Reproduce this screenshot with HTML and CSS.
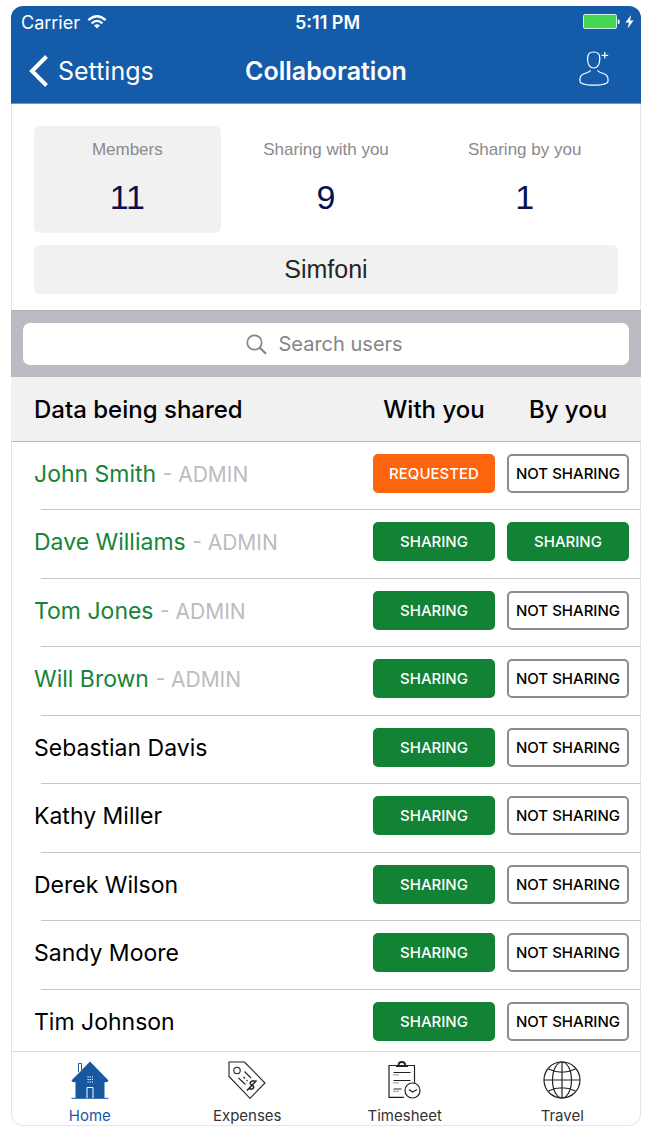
FILE: index.html
```
<!DOCTYPE html>
<html lang="en">
<head>
<meta charset="utf-8">
<meta name="viewport" content="width=device-width, initial-scale=1">
<title>Collaboration</title>
<link rel="stylesheet" href="styles.css">
</head>
<body>
<div class="app">
  <header class="top">
    <div class="status">
      <div class="carrier">Carrier
        <svg class="wifi" width="20" height="14" viewBox="0 0 20 14" fill="none" stroke="#fff" stroke-width="2.3"><path d="M1.3 5.2Q10-2.6 18.700 5.200M4.600 8.300Q10 3.500 15.400 8.300"/><path d="M10 13.600L7 10.500Q10 8.200 13 10.500Z" fill="#fff" stroke="none"/></svg>
      </div>
      <div class="clock">5:11 PM</div>
      <div class="power">
        <svg width="38" height="16" viewBox="0 0 38 16"><rect x=".5" y=".5" width="33" height="14" rx="1.500" fill="#45d651" stroke="#c9f3e0"/><path d="M34.800 5v5.500q2-.6 2-2.750T34.800 5Z" fill="#fff"/></svg>
        <svg width="9" height="14" viewBox="0 0 9 14" fill="#fff"><path d="M6.200 0L.4 7.600H4L2.600 13.600L8.600 5.600H5Z"/></svg>
      </div>
    </div>
    <nav class="nav">
      <a class="back" href="#settings">
        <svg width="20" height="32" viewBox="0 0 20 32" fill="none" stroke="#fff" stroke-width="4"><path d="M17.500 1.500L3 16L17.500 30.500"/></svg>
        Settings</a>
      <h1 class="title">Collaboration</h1>
      <button class="add" type="button" aria-label="Add user">
        <svg width="30" height="35" viewBox="0 0 30 35" fill="none" stroke="#fff" stroke-width="1.200"><path d="M8.600 8.500C8.300 3 10.500 1 14.700 1S21.100 3 20.800 8.500C20.500 14 18 17 14.700 17S8.900 14 8.600 8.500Z"/><path d="M11.500 19.300Q11 20.500 9 21.300L4.500 23Q1 24.500 1 28.500Q.6 31.500 2.500 32.200Q7 34.200 15 34.200T27.500 32.200Q29.400 31.500 29 28.500Q29 24.500 25.500 23L21 21.300Q19 20.500 18.500 19.300"/><path d="M25.800 1V7.600M22.500 4.300H29.200"/></svg>
      </button>
    </nav>
  </header>

  <section class="summary">
    <div class="stats">
      <button class="stat stat-on" type="button"><span class="label">Members</span><span class="count">11</span></button>
      <button class="stat" type="button"><span class="label">Sharing with you</span><span class="count">9</span></button>
      <button class="stat" type="button"><span class="label">Sharing by you</span><span class="count">1</span></button>
    </div>
    <button class="company" type="button">Simfoni</button>
  </section>

  <div class="search">
    <label class="box">
      <svg width="21" height="21" viewBox="0 0 21 21" fill="none" stroke="#85858a" stroke-width="1.700"><circle cx="8.500" cy="8.500" r="7.200"/><path d="M13.500 13.500L20 19.800" stroke-width="2.200"/></svg>
      <input class="field" type="text" placeholder="Search users" aria-label="Search users">
    </label>
  </div>

  <main class="list">
    <table class="people">
      <thead>
        <tr><th class="who" scope="col">Data being shared</th><th class="with" scope="col">With you</th><th class="by" scope="col">By you</th></tr>
      </thead>
      <tbody>
        <tr><td class="who"><span class="admin">John Smith</span> <span class="role">- ADMIN</span></td><td class="with"><button class="pill requested" type="button">REQUESTED</button></td><td class="by"><button class="pill" type="button">NOT SHARING</button></td></tr>
        <tr><td class="who"><span class="admin">Dave Williams</span> <span class="role">- ADMIN</span></td><td class="with"><button class="pill sharing" type="button">SHARING</button></td><td class="by"><button class="pill sharing" type="button">SHARING</button></td></tr>
        <tr><td class="who"><span class="admin">Tom Jones</span> <span class="role">- ADMIN</span></td><td class="with"><button class="pill sharing" type="button">SHARING</button></td><td class="by"><button class="pill" type="button">NOT SHARING</button></td></tr>
        <tr><td class="who"><span class="admin">Will Brown</span> <span class="role">- ADMIN</span></td><td class="with"><button class="pill sharing" type="button">SHARING</button></td><td class="by"><button class="pill" type="button">NOT SHARING</button></td></tr>
        <tr><td class="who">Sebastian Davis</td><td class="with"><button class="pill sharing" type="button">SHARING</button></td><td class="by"><button class="pill" type="button">NOT SHARING</button></td></tr>
        <tr><td class="who">Kathy Miller</td><td class="with"><button class="pill sharing" type="button">SHARING</button></td><td class="by"><button class="pill" type="button">NOT SHARING</button></td></tr>
        <tr><td class="who">Derek Wilson</td><td class="with"><button class="pill sharing" type="button">SHARING</button></td><td class="by"><button class="pill" type="button">NOT SHARING</button></td></tr>
        <tr><td class="who">Sandy Moore</td><td class="with"><button class="pill sharing" type="button">SHARING</button></td><td class="by"><button class="pill" type="button">NOT SHARING</button></td></tr>
        <tr><td class="who">Tim Johnson</td><td class="with"><button class="pill sharing" type="button">SHARING</button></td><td class="by"><button class="pill" type="button">NOT SHARING</button></td></tr>
      </tbody>
    </table>
  </main>

  <nav class="tabs">
    <a class="tab tab-on" href="#home">
      <svg width="38" height="38" viewBox="0 0 38 38"><path d="M7.500 11V2.500H10.500V9" fill="#fff" stroke="#17589f"/><path d="M19 .5L37.500 19.500Q36.500 22 33.500 21V37H4.500V21Q1.500 22 .5 19.500Z" fill="#17589f"/><path d="M.5 37.300H37.500" stroke="#17589f"/><path d="M16 37V26.500H22V37" fill="#17589f" stroke="#fff"/><path d="M16.500 16H22M16.500 18.500H22M16.500 21H22" stroke="#fff" stroke-width="1.200" stroke-dasharray="1.200 1"/></svg>
      Home</a>
    <a class="tab" href="#expenses">
      <svg width="38" height="38" viewBox="0 0 38 38" fill="none" stroke="#222" stroke-width="1.100"><path d="M1 1H16.500L37 22L22 37.300L1 15.500Z"/><circle cx="9" cy="9.500" r="3.200"/><path d="M16.500 10.500L23 17M10.500 17L17.500 23.500M15.500 16L17 17.500M18.500 19L19.500 20"/><path d="M27.500 21.500Q26.500 18.800 23.500 20.300Q21 22 23.200 23.700Q26.500 25 25.500 27Q23.500 29.500 20.800 26.800M19 29.500L28.500 19.500" stroke-width="1.500"/></svg>
      Expenses</a>
    <a class="tab" href="#timesheet">
      <svg width="38" height="38" viewBox="0 0 38 38" fill="none" stroke="#222" stroke-width="1.200"><path d="M18 36.400H3V4.500H28.500V22"/><path d="M10 5H22M12.500 4Q12.500 1 15.800 1T19.200 4" stroke-width="1.800"/><path d="M7.500 11.500H24.500M7.500 19.500H24.500M7.500 28H15.500"/><path d="M7.500 13.800H12.500M7.500 21.800H12.500M7.500 30.300H12.500" stroke="#888" stroke-dasharray="2 1"/><circle cx="26.500" cy="29.500" r="7.500"/><path d="M23 28.500L26.500 31L31 28.500"/></svg>
      Timesheet</a>
    <a class="tab" href="#travel">
      <svg width="38" height="38" viewBox="0 0 38 38" fill="none" stroke="#222" stroke-width="1.200"><circle cx="19" cy="19" r="18"/><ellipse cx="19" cy="19" rx="9.500" ry="18"/><path d="M19 1V37M1 19H37M5.500 8Q19 14.500 32.500 8M5.500 30Q19 23.500 32.500 30"/></svg>
      Travel</a>
  </nav>
</div>
</body>
</html>
```
FILE: styles.css
```
* { box-sizing: border-box; }
body {
  margin: 0;
  height: 100vh;
  padding: 6px 11px 11px;
  background: #fff;
  color: #000;
  font-family: Inter, "Liberation Sans", sans-serif;
}
button {
  margin: 0;
  padding: 0;
  border: 0;
  background: none;
  font-family: "Liberation Sans", Arial, sans-serif;
}
a { text-decoration: none; color: inherit; }
svg { display: block; flex: none; }

.app {
  display: flex;
  flex-direction: column;
  height: 100%;
  border-radius: 12px;
  overflow: hidden;
  box-shadow: inset 0 0 0 1px #e6e6e8;
}
.top {
  background: #145ba9;
  color: #fff;
  border-bottom: 1px solid #6a97c9;
}
.status, .nav {
  display: grid;
  grid-template-columns: 1fr auto 1fr;
  align-items: center;
}
.status {
  height: 32px;
  padding: 0 7px 0 10px;
  font-size: 18px;
}
.carrier { display: flex; align-items: center; gap: 7px; }
.clock { font-weight: 600; }
.power { display: flex; justify-content: flex-end; align-items: center; gap: 4px; }
.nav {
  height: 65px;
  padding: 0 18px;
}
.back { display: flex; align-items: center; gap: 9px; font-size: 25px; }
.title { margin: 0; font-size: 25px; font-weight: 600; }
.add { justify-self: end; margin-right: 14px; padding-bottom: 4px; }

.summary { padding: 22px 23px 16px; }
.stats {
  display: grid;
  grid-template-columns: repeat(3, 1fr);
  gap: 12px;
}
.stat {
  display: flex;
  flex-direction: column;
  align-items: center;
  gap: 15px;
  height: 107px;
  padding-top: 14px;
  border-radius: 6px;
}
.stat-on, .company { background: #f1f1f2; }
.label { font-size: 17px; line-height: 20px; color: #8a8a8c; }
.count { font-size: 34px; line-height: 44px; color: #06124f; }
.company {
  display: block;
  width: 100%;
  height: 49px;
  margin-top: 12px;
  border-radius: 6px;
  font-size: 25px;
  color: #262626;
}

.search {
  padding: 12px;
  background: #bcbbc3;
  border-top: 1px solid #aeadb3;
}
.box {
  display: flex;
  justify-content: center;
  align-items: center;
  gap: 12px;
  height: 42px;
  border-radius: 7px;
  background: #fff;
}
.field {
  width: 128px;
  padding: 0;
  border: 0;
  outline: 0;
  background: none;
  font: 20px Inter, sans-serif;
}
.field::placeholder { color: #85858a; }

.list {
  flex: 1;
  min-height: 0;
  overflow-y: auto;
  scrollbar-width: none;
}
.people {
  width: 100%;
  border-spacing: 0;
  table-layout: fixed;
}
th {
  height: 65px;
  padding: 0;
  background: #f1f1f2;
  border-bottom: 1px solid #b9b9bd;
  font: 500 24px Inter, sans-serif;
}
td {
  height: 68px;
  padding: 0;
  vertical-align: top;
  border-bottom: 1px solid #c6c6ca;
}
tr:nth-child(even) td { height: 69px; }
.who { padding-left: 23px; text-align: left; }
td.who {
  padding-top: 12px;
  border-bottom: 0;
  background: linear-gradient(#c6c6ca, #c6c6ca) 30px 100% / 100% 1px no-repeat;
  font-size: 23px;
  line-height: 40px;
}
.with { width: 134px; padding: 0 6px; }
.by { width: 140px; padding: 0 12px 0 6px; }
td.with, td.by { padding-top: 12px; }
.admin { color: #168339; }
.role { font-size: 21px; color: #bcbcc0; }
.pill {
  display: block;
  width: 100%;
  height: 39px;
  border: 2px solid #8c8c90;
  border-radius: 5px;
  background: #fff;
  color: #000;
  font: 500 15px Inter, sans-serif;
}
.sharing { background: #128234; border-color: #128234; color: #fff; }
.requested { background: #fc640d; border-color: #fc640d; color: #fff; }

.tabs {
  display: grid;
  grid-template-columns: repeat(4, 1fr);
  height: 75px;
  border-top: 1px solid #dcdcde;
}
.tab {
  display: flex;
  flex-direction: column;
  align-items: center;
  gap: 8px;
  padding-top: 9px;
  font-size: 15px;
  line-height: 18px;
  color: #333;
}
.tab-on { color: #17589f; }
```
